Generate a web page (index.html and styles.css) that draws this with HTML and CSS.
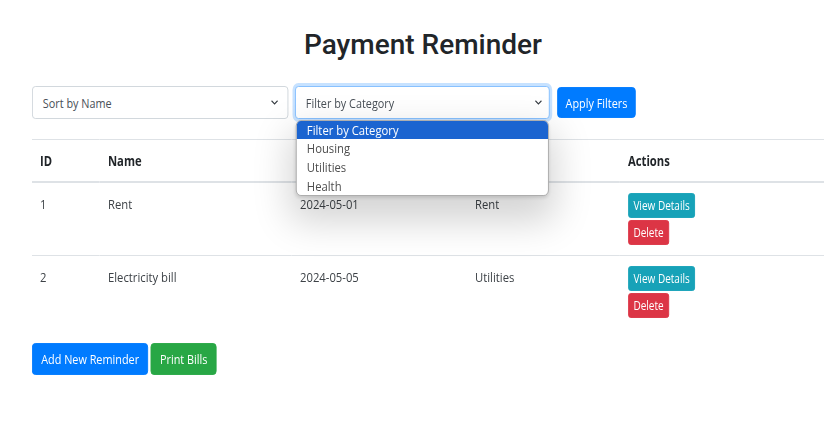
FILE: index.html
```html
<!DOCTYPE html>
<html lang="en">
<head>
<meta charset="utf-8">
<title>Payment Reminder</title>
<link rel="stylesheet" href="styles.css">
</head>
<body>
<div class="page">
  <h1 class="title">Payment Reminder</h1>

  <div class="content">
    <div class="filters">
      <div class="select">
        <span>Sort by Name</span>
        <svg class="chev" width="9" height="5" viewBox="0 0 9 5"><path d="M0.9 0.8 L4.5 4 L8.1 0.8" fill="none" stroke="#343a40" stroke-width="1.3"/></svg>
      </div>
      <div class="select-wrap">
        <div class="select focused">
          <span>Filter by Category</span>
          <svg class="chev" width="9" height="5" viewBox="0 0 9 5"><path d="M0.9 0.8 L4.5 4 L8.1 0.8" fill="none" stroke="#343a40" stroke-width="1.3"/></svg>
        </div>
        <ul class="dropdown">
          <li class="active">Filter by Category</li>
          <li>Housing</li>
          <li>Utilities</li>
          <li>Health</li>
        </ul>
      </div>
      <button class="btn btn-primary">Apply Filters</button>
    </div>

    <table class="table">
      <thead>
        <tr>
          <th class="c-id">ID</th>
          <th class="c-name">Name</th>
          <th class="c-date">Due Date</th>
          <th class="c-cat">Category</th>
          <th class="c-act">Actions</th>
        </tr>
      </thead>
      <tbody>
        <tr>
          <td>1</td>
          <td>Rent</td>
          <td>2024-05-01</td>
          <td>Rent</td>
          <td><div class="row-actions"><button class="btn btn-sm btn-info">View Details</button><button class="btn btn-sm btn-danger">Delete</button></div></td>
        </tr>
        <tr>
          <td>2</td>
          <td>Electricity bill</td>
          <td>2024-05-05</td>
          <td>Utilities</td>
          <td><div class="row-actions"><button class="btn btn-sm btn-info">View Details</button><button class="btn btn-sm btn-danger">Delete</button></div></td>
        </tr>
      </tbody>
    </table>

    <div class="bottom">
      <button class="btn btn-primary btn-lg">Add New Reminder</button>
      <button class="btn btn-success btn-lg">Print Bills</button>
    </div>
  </div>
</div>
</body>
</html>
```

FILE: styles.css
```css
html, body {
  margin: 0;
  padding: 0;
  background: #ffffff;
  overflow: hidden;
}

body {
  font-family: "Open Sans", "Noto Sans", sans-serif;
  font-size: 13.5px;
  color: #212529;
}

.page {
  width: 782px;
  padding-left: 32px;
}

.title {
  font-family: Roboto, "Liberation Sans", sans-serif;
  font-weight: 500;
  font-size: 28px;
  line-height: 34px;
  text-align: center;
  margin: 28px 0 24px 0;
  color: #212529;
}

/* the screenshot's body text is horizontally condensed */
.content {
  width: 960px;
  transform: scaleX(0.835);
  transform-origin: 0 0;
}

.filters {
  display: flex;
  align-items: flex-start;
  gap: 8.4px;
  height: 33px;
}

.select-wrap {
  position: relative;
}

.select {
  box-sizing: border-box;
  height: 33px;
  width: 306.6px;
  border: 1px solid #ced4da;
  border-radius: 4px;
  display: flex;
  align-items: center;
  justify-content: space-between;
  padding: 0 11px 0 12px;
  font-size: 13px;
  color: #495057;
  background: #fff;
}

.select-wrap .select {
  width: 305.4px;
  padding-right: 8px;
}

.select.focused {
  border-color: #80bdff;
  box-shadow: 0 0 0 3px rgba(0, 123, 255, 0.22);
}

.chev {
  display: block;
}

.dropdown {
  position: absolute;
  top: 34px;
  left: 1.2px;
  width: 303px;
  height: 76px;
  box-sizing: border-box;
  margin: 0;
  padding: 0;
  list-style: none;
  background: #fff;
  border: 1px solid #a8a8a8;
  border-radius: 6px;
  overflow: hidden;
  box-shadow: 0 18px 40px 8px rgba(0, 0, 0, 0.17), 0 2px 4px rgba(0, 0, 0, 0.12);
  z-index: 5;
  font-size: 13.5px;
}

.dropdown li {
  height: 19px;
  line-height: 19px;
  padding-left: 12px;
  color: #4d4d4d;
}

.dropdown li.active {
  background: #1b64d0;
  color: #fff;
  height: 18px;
  line-height: 18px;
}

.btn {
  font-family: inherit;
  font-size: 13px;
  border: 1px solid transparent;
  border-radius: 4px;
  color: #fff;
  cursor: pointer;
  box-sizing: border-box;
  margin: 0;
}

.filters .btn {
  height: 31px;
  margin-top: 1px;
  width: 94.6px;
  padding: 0;
}

.btn-primary { background: #007bff; border-color: #007bff; }
.btn-info { background: #17a2b8; border-color: #17a2b8; }
.btn-danger { background: #dc3545; border-color: #dc3545; }
.btn-success { background: #28a745; border-color: #28a745; }

.btn-sm {
  height: 25px;
  font-size: 12px;
  padding: 0 5.5px;
  border-radius: 3px;
}

.btn-lg {
  height: 32px;
  padding: 0 10px;
}

.table {
  width: 980px;
  border-collapse: collapse;
  margin-top: 20px;
}

.table th,
.table td {
  text-align: left;
  vertical-align: top;
  padding: 10px 9.6px;
  line-height: 22px;
  border-top: 1px solid #dee2e6;
}

.table td {
  color: #3d4247;
}

.table th {
  font-weight: 700;
  padding-bottom: 9px;
  border-bottom: 2px solid #dee2e6;
}

.c-id { width: 62.2px; }
.c-name { width: 210.8px; }
.c-date { width: 190.4px; }
.c-cat { width: 164px; }

.row-actions {
  display: flex;
  flex-direction: column;
  align-items: flex-start;
  gap: 2px;
}

.bottom {
  display: flex;
  gap: 3px;
  margin-top: 15px;
}
```
